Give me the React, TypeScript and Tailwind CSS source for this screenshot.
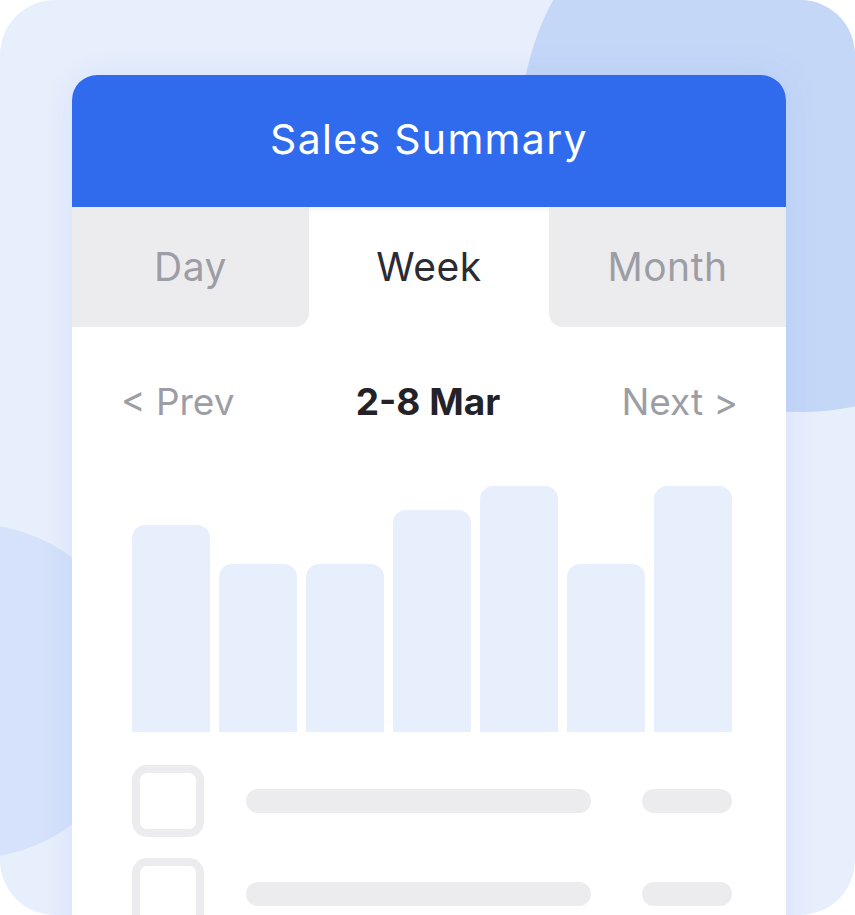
import React from 'react';

// Bar heights for the week chart (px)
const BARS = [207, 168, 168, 222, 246, 168, 246];

const TABS = ['Day', 'Week', 'Month'];

export default function App() {
  const active = 'Week';

  return (
    <div className="relative w-[855px] h-[915px] overflow-hidden rounded-[55px] bg-[#E8EFFC] font-['Inter',sans-serif]">
      {/* Background blobs */}
      <div className="absolute left-[520px] top-[-148px] w-[560px] h-[560px] rounded-full bg-[#C5D7F7]" />
      <div className="absolute left-[-195px] top-[524px] w-[334px] h-[334px] rounded-full bg-[#D6E2FB]" />

      {/* Card */}
      <div className="relative mt-[75px] ml-[72px] w-[714px] h-[900px] bg-white rounded-t-[25px] shadow-[0_0_36px_rgba(48,107,238,0.10)] overflow-hidden">
        {/* Header */}
        <div className="h-[132px] bg-[#306BEE] flex items-center justify-center">
          <h1 className="text-white text-[41px] font-normal tracking-[1.3px] leading-none pb-[3px]">Sales Summary</h1>
        </div>

        {/* Tabs */}
        <div className="grid grid-cols-[237px_240px_237px] h-[120px]">
          {TABS.map((tab, i) => {
            const isActive = tab === active;
            return (
              <div
                key={tab}
                className={
                  isActive
                    ? 'flex items-center justify-center bg-white text-[#2B2B33] shadow-[inset_0_8px_10px_-8px_rgba(0,0,0,0.08)]'
                    : i === 0
                    ? 'flex items-center justify-center bg-[#ECECEE] text-[#9D9DA5] rounded-br-[14px]'
                    : 'flex items-center justify-center bg-[#ECECEE] text-[#9D9DA5] rounded-bl-[14px]'
                }
              >
                <span className="text-[39px] leading-none pb-[2px] tracking-[0.5px]">{tab}</span>
              </div>
            );
          })}
        </div>

        {/* Date navigation */}
        <div className="flex items-center justify-between pl-[49px] pr-[48px] pt-[55px] h-[95px] text-[37px] leading-[40px]">
          <span className="text-[#9D9DA5]">&lt; Prev</span>
          <span className="text-[#222228] font-bold">2-8 Mar</span>
          <span className="text-[#9D9DA5]">Next &gt;</span>
        </div>

        {/* Chart */}
        <div className="mt-[64px] pl-[60px] pr-[54px] h-[246px] flex items-end gap-[9px]">
          {BARS.map((h, i) => (
            <div
              key={i}
              className="w-[78px] bg-[#E8EFFC] rounded-t-[13px]"
              style={{ height: h }}
            />
          ))}
        </div>

        {/* List placeholders */}
        <div className="mt-[33px] pl-[60px] pr-[54px] flex flex-col gap-[21px]">
          {[0, 1].map(i => (
            <div key={i} className="flex items-center">
              <div className="w-[72px] h-[72px] rounded-[15px] border-[8px] border-[#ECECEE]" />
              <div className="ml-[42px] w-[345px] h-[24px] rounded-full bg-[#ECECEE]" />
              <div className="ml-auto w-[90px] h-[24px] rounded-full bg-[#ECECEE]" />
            </div>
          ))}
        </div>
      </div>
    </div>
  );
}
